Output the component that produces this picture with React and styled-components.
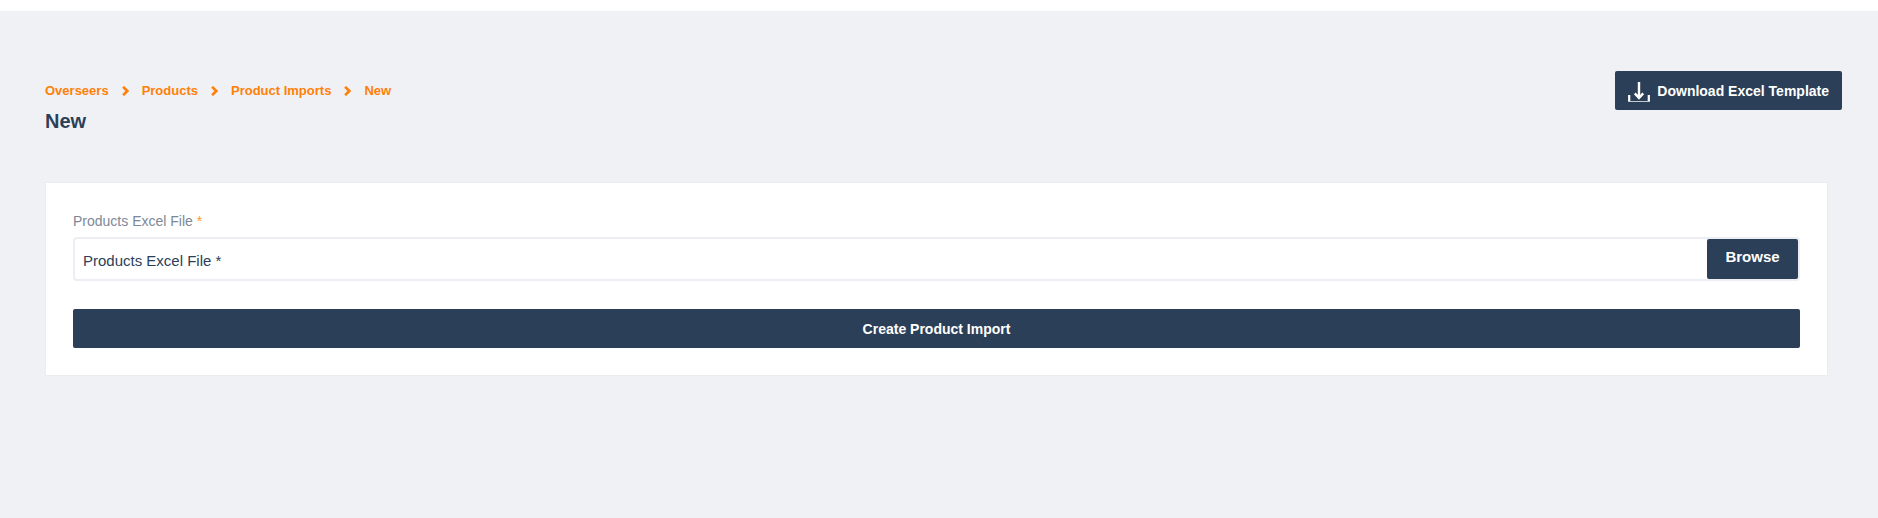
import React, { Fragment } from "react";
import styled, { createGlobalStyle } from "styled-components";

const navy = "#2c3f58";
const orange = "#ff8008";
const canvas = "#f0f1f5";

const GlobalStyle = createGlobalStyle`
  *, *::before, *::after { box-sizing: border-box; }
  body {
    margin: 0;
    background: ${canvas};
    color: ${navy};
    font-family: "Liberation Sans", Arial, sans-serif;
  }
`;

const TopBar = styled.div`
  height: 11px;
  background: #fff;
`;

const Page = styled.main`
  padding: 60px 36px 40px 45px;
`;

const Header = styled.header`
  display: flex;
  align-items: flex-start;
  justify-content: space-between;
`;

const Heading = styled.div`
  padding-top: 10px;
`;

const Trail = styled.nav`
  display: flex;
  align-items: center;
  gap: 13px;
  color: ${orange};
`;

const Crumb = styled.a`
  color: inherit;
  font-size: 13px;
  font-weight: 700;
  line-height: 20px;
  text-decoration: none;
`;

const Title = styled.h1`
  margin: 8px 0 0;
  font-size: 20px;
  font-weight: 700;
  line-height: 24px;
`;

const Button = styled.button`
  display: flex;
  align-items: center;
  justify-content: center;
  gap: 7px;
  width: ${(p) => (p.$block ? "100%" : "auto")};
  height: 39px;
  padding: 0 13px;
  border: 0;
  border-radius: 2px;
  background: ${navy};
  color: #fff;
  font: 700 14px/20px "Liberation Sans", Arial, sans-serif;
  cursor: pointer;
`;

const Card = styled.section`
  margin: 49px 14px 0 0;
  padding: 28px 27px 27px;
  border: 1px solid #ebedf1;
  background: #fff;
`;

const Label = styled.label`
  display: block;
  margin: 0 0 6px;
  color: #7d8897;
  font-size: 14px;
  line-height: 20px;
`;

const Required = styled.span`
  color: #ff9a2e;
`;

const FileField = styled.div`
  display: flex;
  height: 44px;
  margin: 0 0 28px;
  border: 2px solid #edeef3;
  border-radius: 4px;
`;

const FileName = styled.input`
  flex: 1;
  min-width: 0;
  padding: 3px 8px 0;
  border: 0;
  outline: 0;
  background: transparent;
  color: ${navy};
  font: 400 15px/20px "Liberation Sans", Arial, sans-serif;
`;

const Browse = styled.button`
  width: 91px;
  padding: 0 0 5px;
  border: 0;
  border-radius: 2px;
  background: ${navy};
  color: #fff;
  font: 700 15px/20px "Liberation Sans", Arial, sans-serif;
  cursor: pointer;
`;

const Chevron = () => (
  <svg width="7" height="10" viewBox="0 0 7 10" fill="none" aria-hidden="true">
    <path d="M1.1 .8 5.3 5 1.1 9.2" stroke="currentColor" strokeWidth="2.6" />
  </svg>
);

const DownloadIcon = () => (
  <svg width="22" height="22" viewBox="0 0 22 22" fill="none" aria-hidden="true">
    <path d="M11 2v16M6.8 13.4 11 18l4.2-4.6" stroke="#fff" strokeWidth="2.4" />
    <path d="M1.2 15v7M20.8 15v7" stroke="#fff" strokeWidth="2.2" />
    <path d="M0 21.5h22" stroke="#c4cad3" />
  </svg>
);

const crumbs = ["Overseers", "Products", "Product Imports", "New"];

export default function App() {
  return (
    <>
      <GlobalStyle />
      <TopBar />
      <Page>
        <Header>
          <Heading>
            <Trail aria-label="Breadcrumb">
              {crumbs.map((name, i) => (
                <Fragment key={name}>
                  {i > 0 && <Chevron />}
                  <Crumb href="#">{name}</Crumb>
                </Fragment>
              ))}
            </Trail>
            <Title>New</Title>
          </Heading>
          <Button type="button">
            <DownloadIcon />
            Download Excel Template
          </Button>
        </Header>
        <Card>
          <form onSubmit={(e) => e.preventDefault()}>
            <Label htmlFor="excel-file">
              Products Excel File <Required>*</Required>
            </Label>
            <FileField>
              <FileName id="excel-file" type="text" readOnly value="Products Excel File *" />
              <Browse type="button">Browse</Browse>
            </FileField>
            <Button type="submit" $block>
              Create Product Import
            </Button>
          </form>
        </Card>
      </Page>
    </>
  );
}
